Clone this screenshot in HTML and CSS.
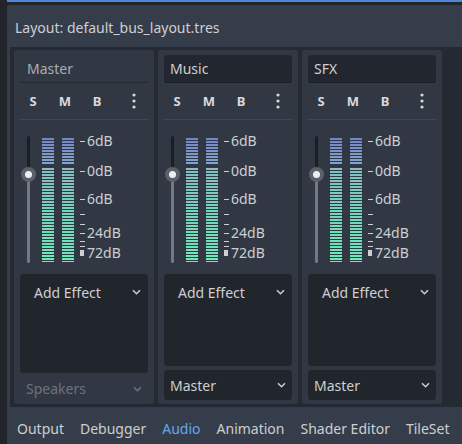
FILE: index.html
```html
<!DOCTYPE html>
<html lang="en">
<head>
    <meta charset="UTF-8">
    <title>Audio Buses</title>
    <link rel="stylesheet" href="styles.css">
</head>
<body>
    <div class="frame">
        <div class="topline"></div>
        <div class="panel">
            <div class="layout-bar">Layout: default_bus_layout.tres</div>

            <div class="buses">
                <!-- Master -->
                <div class="strip">
                    <div class="bus-name flat">Master</div>
                    <div class="bus-buttons">
                        <span class="toggle">S</span>
                        <span class="toggle">M</span>
                        <span class="toggle">B</span>
                        <svg class="dots" width="4" height="16" viewBox="0 0 4 16"><circle cx="2" cy="2" r="1.6"/><circle cx="2" cy="8" r="1.6"/><circle cx="2" cy="14" r="1.6"/></svg>
                    </div>
                    <div class="separator"></div>
                    <div class="meter">
                        <div class="slider"><span class="knob"></span></div>
                        <div class="bar"></div>
                        <div class="bar second"></div>
                        <div class="scale">
                            <div class="mark" style="top: -2px"><i></i>6dB</div>
                            <div class="mark" style="top: 28px"><i></i>0dB</div>
                            <div class="mark" style="top: 56px"><i></i>6dB</div>
                            <div class="mark" style="top: 71px"><i></i></div>
                            <div class="mark" style="top: 81px"><i></i></div>
                            <div class="mark" style="top: 90px"><i></i>24dB</div>
                            <div class="mark" style="top: 98px"><i></i></div>
                            <div class="mark" style="top: 103px"><i></i></div>
                            <div class="mark" style="top: 110px"><i class="block"></i>72dB</div>
                        </div>
                    </div>
                    <div class="effects">
                        <div class="add-effect">Add Effect
                            <svg class="chevron" width="9" height="6" viewBox="0 0 9 6"><path d="M1 1.2 L4.5 4.7 L8 1.2"/></svg>
                        </div>
                    </div>
                    <div class="send disabled">Speakers
                        <svg class="chevron" width="9" height="6" viewBox="0 0 9 6"><path d="M1 1.2 L4.5 4.7 L8 1.2"/></svg>
                    </div>
                </div>

                <!-- Music -->
                <div class="strip">
                    <div class="bus-name">Music</div>
                    <div class="bus-buttons">
                        <span class="toggle">S</span>
                        <span class="toggle">M</span>
                        <span class="toggle">B</span>
                        <svg class="dots" width="4" height="16" viewBox="0 0 4 16"><circle cx="2" cy="2" r="1.6"/><circle cx="2" cy="8" r="1.6"/><circle cx="2" cy="14" r="1.6"/></svg>
                    </div>
                    <div class="separator"></div>
                    <div class="meter">
                        <div class="slider"><span class="knob"></span></div>
                        <div class="bar"></div>
                        <div class="bar second"></div>
                        <div class="scale">
                            <div class="mark" style="top: -2px"><i></i>6dB</div>
                            <div class="mark" style="top: 28px"><i></i>0dB</div>
                            <div class="mark" style="top: 56px"><i></i>6dB</div>
                            <div class="mark" style="top: 71px"><i></i></div>
                            <div class="mark" style="top: 81px"><i></i></div>
                            <div class="mark" style="top: 90px"><i></i>24dB</div>
                            <div class="mark" style="top: 98px"><i></i></div>
                            <div class="mark" style="top: 103px"><i></i></div>
                            <div class="mark" style="top: 110px"><i class="block"></i>72dB</div>
                        </div>
                    </div>
                    <div class="effects">
                        <div class="add-effect">Add Effect
                            <svg class="chevron" width="9" height="6" viewBox="0 0 9 6"><path d="M1 1.2 L4.5 4.7 L8 1.2"/></svg>
                        </div>
                    </div>
                    <div class="send dropdown">Master
                        <svg class="chevron" width="9" height="6" viewBox="0 0 9 6"><path d="M1 1.2 L4.5 4.7 L8 1.2"/></svg>
                    </div>
                </div>

                <!-- SFX -->
                <div class="strip">
                    <div class="bus-name">SFX</div>
                    <div class="bus-buttons">
                        <span class="toggle">S</span>
                        <span class="toggle">M</span>
                        <span class="toggle">B</span>
                        <svg class="dots" width="4" height="16" viewBox="0 0 4 16"><circle cx="2" cy="2" r="1.6"/><circle cx="2" cy="8" r="1.6"/><circle cx="2" cy="14" r="1.6"/></svg>
                    </div>
                    <div class="separator"></div>
                    <div class="meter">
                        <div class="slider"><span class="knob"></span></div>
                        <div class="bar"></div>
                        <div class="bar second"></div>
                        <div class="scale">
                            <div class="mark" style="top: -2px"><i></i>6dB</div>
                            <div class="mark" style="top: 28px"><i></i>0dB</div>
                            <div class="mark" style="top: 56px"><i></i>6dB</div>
                            <div class="mark" style="top: 71px"><i></i></div>
                            <div class="mark" style="top: 81px"><i></i></div>
                            <div class="mark" style="top: 90px"><i></i>24dB</div>
                            <div class="mark" style="top: 98px"><i></i></div>
                            <div class="mark" style="top: 103px"><i></i></div>
                            <div class="mark" style="top: 110px"><i class="block"></i>72dB</div>
                        </div>
                    </div>
                    <div class="effects">
                        <div class="add-effect">Add Effect
                            <svg class="chevron" width="9" height="6" viewBox="0 0 9 6"><path d="M1 1.2 L4.5 4.7 L8 1.2"/></svg>
                        </div>
                    </div>
                    <div class="send dropdown">Master
                        <svg class="chevron" width="9" height="6" viewBox="0 0 9 6"><path d="M1 1.2 L4.5 4.7 L8 1.2"/></svg>
                    </div>
                </div>
            </div>

            <div class="tabs">
                <span>Output</span>
                <span>Debugger</span>
                <span class="active">Audio</span>
                <span>Animation</span>
                <span>Shader Editor</span>
                <span>TileSet</span>
            </div>
        </div>
    </div>
</body>
</html>
```

FILE: styles.css
```css
body {
    margin: 0;
    width: 462px;
    height: 444px;
    overflow: hidden;
    background-color: #21252b;
    font-family: "Noto Sans", "DejaVu Sans", sans-serif;
    font-size: 14px;
    color: #cdcfd2;
}
.frame {
    display: flex;
    flex-direction: column;
    height: 444px;
    padding-left: 7px;
    box-sizing: border-box;
}
.topline {
    height: 2px;
    background-color: #4b87d6;
    margin-bottom: 3px;
}
.panel {
    flex: 1;
    display: flex;
    flex-direction: column;
    background-color: #363d4a;
    border-top-left-radius: 3px;
}
.layout-bar {
    height: 42px;
    box-sizing: border-box;
    padding: 2px 0 0 8px;
    display: flex;
    align-items: center;
    white-space: nowrap;
}
.buses {
    height: 360px;
    box-sizing: border-box;
    margin-left: 3px;
    padding: 3px 0 3px 4px;
    background-color: #252a32;
    display: flex;
    gap: 4px;
}
.strip {
    width: 140px;
    flex-shrink: 0;
    box-sizing: border-box;
    padding: 5px 6px 4px;
    background-color: #323843;
    border-radius: 3px;
    display: flex;
    flex-direction: column;
}
.bus-name {
    height: 28px;
    flex-shrink: 0;
    box-sizing: border-box;
    padding-left: 6px;
    display: flex;
    align-items: center;
    background-color: #22262e;
    border-radius: 3px;
    border-bottom: 1px solid #1c1f25;
}
.bus-name.flat {
    background: none;
    border-radius: 0;
    padding-left: 7px;
    color: #a9adb3;
    border-bottom: 1px solid #262a31;
}
.bus-buttons {
    height: 36px;
    flex-shrink: 0;
    display: flex;
    align-items: center;
    gap: 6px;
    padding-right: 12px;
}
.toggle {
    width: 26px;
    text-align: center;
    font-size: 13px;
    font-weight: bold;
    color: #d8dadd;
}
.dots {
    margin-left: auto;
    fill: #d4d6d9;
}
.separator {
    height: 1px;
    flex-shrink: 0;
    margin: 0 -1px;
    background-color: #414753;
}
.meter {
    height: 154px;
    flex-shrink: 0;
    box-sizing: border-box;
    padding-top: 16px;
    display: flex;
    align-items: flex-start;
}
.slider {
    position: relative;
    width: 3px;
    height: 127px;
    margin-left: 7px;
    border-radius: 2px;
    background: linear-gradient(to bottom, #1b1e23 0 38px, #737881 38px);
}
.knob {
    position: absolute;
    left: -2px;
    top: 35px;
    width: 7px;
    height: 7px;
    border-radius: 50%;
    background-color: #eeeeee;
    box-shadow: 0 0 0 4px #5b616b;
}
.bar {
    width: 12px;
    height: 124px;
    margin: 2px 0 0 12px;
    background:
        repeating-linear-gradient(to bottom, transparent 0 2px, #323843 2px 3px),
        linear-gradient(to bottom, #6f86c8 0, #86a3c9 26px, #323843 26px, #323843 29px, #89bbc3 29px, #78d2bd 70px, #6deab9 124px);
}
.bar.second {
    margin-left: 8px;
}
.scale {
    position: relative;
    flex: 1;
    height: 127px;
    margin-left: 6px;
}
.mark {
    position: absolute;
    left: 0;
    height: 14px;
    display: flex;
    align-items: center;
    line-height: 14px;
    white-space: nowrap;
}
.mark i {
    display: block;
    width: 5px;
    height: 1px;
    margin-right: 2px;
    background-color: #cdcfd2;
}
.mark i.block {
    width: 4px;
    height: 6px;
    margin-right: 3px;
}
.effects {
    flex: 1;
    background-color: #21252c;
    border-radius: 3px;
}
.add-effect {
    height: 36px;
    display: flex;
    align-items: center;
    padding: 0 7px 0 14px;
}
.chevron {
    margin-left: auto;
    fill: none;
    stroke: #c8cbcf;
    stroke-width: 1.6;
}
.send {
    flex-shrink: 0;
    display: flex;
    align-items: center;
    padding: 0 6px;
}
.send.disabled {
    height: 31px;
    margin-bottom: -4px;
    color: #6c727c;
}
.send.disabled .chevron {
    stroke: #6c727c;
}
.send.dropdown {
    height: 30px;
    margin-top: 4px;
    box-sizing: border-box;
    background-color: #21252c;
    border-radius: 3px;
}
.tabs {
    flex: 1;
    display: flex;
    align-items: center;
    gap: 16px;
    padding: 5px 0 0 10px;
    white-space: nowrap;
}
.tabs .active {
    color: #63a7ea;
}
```
